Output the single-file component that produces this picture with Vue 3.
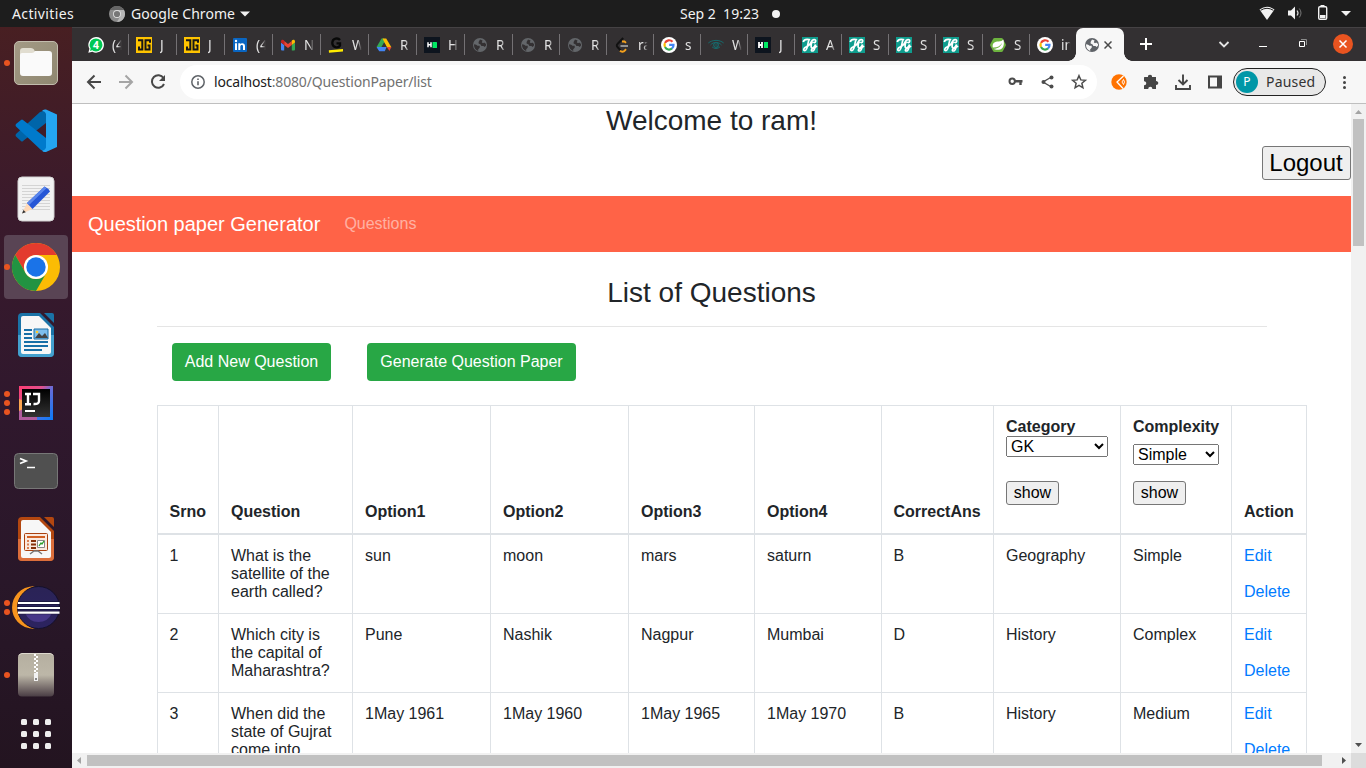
<script setup>
const tabs = [
  { icon: 'whatsapp', title: '(4' },
  { icon: 'jgy', title: 'J' },
  { icon: 'jgy', title: 'J' },
  { icon: 'linkedin', title: '(4' },
  { icon: 'gmail', title: 'N' },
  { icon: 'gword', title: 'W' },
  { icon: 'drive', title: 'R' },
  { icon: 'hr', title: 'H' },
  { icon: 'globe', title: 'R' },
  { icon: 'globe', title: 'R', short: true },
  { icon: 'globe', title: 'R', short: true },
  { icon: 'leet', title: 'ra', short: true },
  { icon: 'google', title: 's', short: true },
  { icon: 'eye', title: 'W', short: true },
  { icon: 'hr2', title: 'J', short: true },
  { icon: 'jgt', title: 'A', short: true },
  { icon: 'jgt', title: 'S', short: true },
  { icon: 'jgt', title: 'S', short: true },
  { icon: 'jgt', title: 'S', short: true },
  { icon: 'spring', title: 'S', short: true },
  { icon: 'google', title: 'in', short: true, last: true },
]
const dock = [
  { icon: 'files', dots: 1 },
  { icon: 'vscode', dots: 0 },
  { icon: 'editor', dots: 0 },
  { icon: 'chrome', dots: 1, active: true },
  { icon: 'writer', dots: 0 },
  { icon: 'intellij', dots: 3 },
  { icon: 'terminal', dots: 0 },
  { icon: 'impress', dots: 0 },
  { icon: 'eclipse', dots: 2 },
  { icon: 'archive', dots: 1 },
]
const rows = [
  ['1', 'What is the satellite of the earth called?', 'sun', 'moon', 'mars', 'saturn', 'B', 'Geography', 'Simple'],
  ['2', 'Which city is the capital of Maharashtra?', 'Pune', 'Nashik', 'Nagpur', 'Mumbai', 'D', 'History', 'Complex'],
  ['3', 'When did the state of Gujrat come into', '1May 1961', '1May 1960', '1May 1965', '1May 1970', 'B', 'History', 'Medium'],
]
const plain = ['Srno', 'Question', 'Option1', 'Option2', 'Option3', 'Option4', 'CorrectAns']
</script>

<template>
  <div class="desktop">
    <svg class="defs" width="0" height="0">
      <defs>
        <linearGradient id="gFiles" x1="0" y1="0" x2="1" y2="1"><stop offset="0" stop-color="#a39a85" /><stop offset="1" stop-color="#8f8770" /></linearGradient>
        <linearGradient id="gIj" x1="0" y1="0" x2="1" y2="1"><stop offset="0" stop-color="#fd3d72" /><stop offset=".35" stop-color="#e0508c" /><stop offset=".5" stop-color="#6b6bd6" /><stop offset="1" stop-color="#087cfa" /></linearGradient>
        <linearGradient id="gIn" x1="0" y1="0" x2="0" y2="1"><stop offset="0" stop-color="#000" /><stop offset="1" stop-color="#333" /></linearGradient>
        <linearGradient id="gZip" x1="0" y1="0" x2="0" y2="1"><stop offset="0" stop-color="#b5afa0" /><stop offset=".5" stop-color="#bdb7a8" /><stop offset="1" stop-color="#4a3d44" /></linearGradient>
        <linearGradient id="gEc" x1="0" y1="0" x2="0" y2="1"><stop offset="0" stop-color="#2a2356" /><stop offset="1" stop-color="#2c2360" /></linearGradient>
        <symbol id="globe" viewBox="0 0 16 16"><circle cx="8" cy="8" r="7" fill="currentColor" /><path d="M2.200 7.200c1.600.2 2.600.7 3.300 1.500h2.200v2.100L6.200 12.200v1.700C3.600 13 2 10.800 2 8z" fill="var(--hole)" /><path d="M8 2.600 6.600 5v1.500l2 .9.8 1.500h2l1.300 1.200 1.300-1.500V7L12.200 5.600l-1.200.6L9.800 5.300l.8-1.900z" fill="var(--hole)" /></symbol>
        <symbol id="whatsapp" viewBox="0 0 16 16"><path d="M.3 15.700 1.400 11.800A7.800 7.800 0 1 1 4.400 14.700z" fill="#fff" /><circle cx="8" cy="7.900" r="6.500" fill="#00c853" /><path d="M2 14l.8-3 2 2z" fill="#00c853" /><text x="4.800" y="12" font-size="11" font-weight="700" fill="#fff" font-family="Roboto, sans-serif">4</text></symbol>
        <symbol id="jgy" viewBox="0 0 16 16"><path fill="#ffc400" d="M0 0h16v16H0z" /><path d="M2 3.200h4.300v9.300H3V9.500M14 5.800V3.200H9.500v9.300H13.500V8.500h-2" fill="none" stroke="#171717" stroke-width="2" /></symbol>
        <symbol id="linkedin" viewBox="0 0 16 16"><rect x="1" y="1" width="14" height="14" rx="1" fill="#0a66c2" /><path fill="#fff" d="M3 6.200h2V13H3zM6.300 6.200h2v1c1-1.600 4.700-1.700 4.700 1.800v4h-2V9.500c0-2.200-2.700-1.900-2.700 0V13h-2z" /><circle cx="4" cy="4" r="1.200" fill="#fff" /></symbol>
        <symbol id="gmail" viewBox="0 0 16 16"><path fill="#4285f4" d="M1 5.500 4.200 8v5.500H2a1 1 0 0 1-1-1z" /><path fill="#34a853" d="M15 5.500 11.800 8v5.500H14a1 1 0 0 0 1-1z" /><path fill="#ea4335" d="M4.200 4 8 6.900 11.800 4v4L8 10.900 4.200 8z" /><path fill="#c5221f" d="M1 4.500C1 2.800 2.800 2.300 4.200 3.500V8L1 5.500z" /><path fill="#fbbc04" d="M15 4.500c0-1.700-1.800-2.200-3.200-1V8L15 5.500z" /></symbol>
        <symbol id="gword" viewBox="0 0 16 16"><path d="M12 3C10 .5 4.500 1 4.300 5.700c-.2 4.900 6 5.800 7.700 2.900V6.400H8.500" fill="none" stroke="#080808" stroke-width="2.300" /><path d="M.8 13.200 15 12v2.500L1 15.700z" fill="#ffeb00" /></symbol>
        <symbol id="drive" viewBox="0 0 16 16"><path fill="#34a853" d="M5.500 1.500h2.700l1.500 2.600L4 14 .6 10z" /><path fill="#fbbc04" d="M6.500 1.500h3.700l5.200 8.700h-4.500z" /><path fill="#4285f4" d="M.6 10h10l-1.800 4.300H3.200z" /><path fill="#ea4335" d="M10.800 10h4.600l-2 4z" /><path fill="#333032" d="m8 5.400 2.600 4.600H5.400z" /></symbol>
        <symbol id="hr" viewBox="0 0 16 16"><path fill="#0d141e" d="M0 0h16v16H0z" /><path d="M4 5.300v5M7 5.300v5M4 7.800h3" stroke="#fff" stroke-width="1.500" /><rect x="8.500" y="5" width="4.500" height="6" rx=".5" fill="#00ea64" /></symbol>
        <symbol id="hr2" viewBox="0 0 16 16"><path fill="#0d141e" d="M0 0h16v16H0z" /><path d="M4 5v6M7 5v6M4 8h3" stroke="#fff" stroke-width="1.800" /><rect x="9" y="5" width="4" height="6" fill="#00ea64" /></symbol>
        <symbol id="leet" viewBox="0 0 16 16"><path d="M9.200 1 3.500 7a2 2 0 0 0 0 3l3 3.300" fill="none" stroke="#111" stroke-width="2" /><path d="M8 4.500h2.500l1.500 1.400M6 13.700c1.400 1.600 3.600 1.300 5-.4l1-1.200" fill="none" stroke="#f5a11c" stroke-width="1.900" /><path d="M6.500 9H14" stroke="#b3b3b3" stroke-width="1.500" /></symbol>
        <symbol id="google" viewBox="0 0 16 16"><circle cx="8" cy="8" r="8" fill="#fff" /><g fill="none" stroke-width="2.200"><path d="M11.500 4.800A4.500 4.500 0 0 0 4 5.900" stroke="#ea4335" /><path d="M4 5.900a4.700 4.700 0 0 0 0 4.200" stroke="#fbbc04" /><path d="M4 10.100a4.500 4.500 0 0 0 7 1.300" stroke="#34a853" /><path d="M11 11.500c1.200-1 1.600-2.200 1.500-3.700H8.200" stroke="#4285f4" /></g></symbol>
        <symbol id="eye" viewBox="0 0 16 16"><path d="M.3 6C4.500 2.500 11.500 2.500 15.700 6M2.500 8C5.500 4.500 10.500 4.500 13.500 8M4 9.800c2.500 2.300 5.500 2.300 8 0" fill="none" stroke="#17696b" stroke-width="1" /><circle cx="8" cy="8" r="2.300" fill="none" stroke="#17696b" stroke-width="1.200" /><circle cx="8" cy="8" r=".8" fill="#17696b" /></symbol>
        <symbol id="jgt" viewBox="0 0 16 16"><path fill="#0f9d8e" d="M0 0h16v16H0z" /><path d="M1.200 5C2 2.300 4 2 7.200 2.600 5.500 5 6 12.800 3.300 13.500c-2.500.5-2-2.600 1-3.600s4-2.500 5-5.100c1-2.600 4.700-3 4.400-.6-.2 1.800-2 2-2 .5M10.500 4.500c-2.200 3-1.700 7 .3 6.500 1.500-.5 2.200-2 2.700-3.500-.5 3.500-.8 6.500-3 6.500-1.500 0-1.700-1.500.5-2.500 1.500-.8 3-1.300 4-2.500" fill="none" stroke="#fff" stroke-width="1.700" /></symbol>
        <symbol id="spring" viewBox="0 0 16 16"><path fill="#6db33f" d="M4.500 1h7a1.500 1.500 0 0 1 1.300.8L15.600 7a2 2 0 0 1 0 2l-2.800 5.200a1.500 1.500 0 0 1-1.300.8h-7a1.500 1.500 0 0 1-1.300-.8L.4 9a2 2 0 0 1 0-2l2.800-5.200A1.500 1.500 0 0 1 4.500 1z" /><path fill="#fff" d="M13.300 2.500c1.500 5 .2 9.800-4.800 10.300-2 .2-3.700-.2-4.800-1C8 11.700 11 9.500 12 6c-2 3.500-5 4.700-9.200 4.500C2 5.500 5 4.600 8.500 4.400c2.500-.1 3.800-.6 4.800-1.900z" /></symbol>

        <symbol id="files" viewBox="0 0 64 64"><rect x="10.500" y="10.500" width="43" height="43" rx="4.500" fill="url(#gFiles)" stroke="#c2bcad" stroke-width="1" /><path d="M16 20q0-3 3-3h8q2 0 3 1.500l1.500 3.500H45v14H16z" fill="#e1ddd0" /><path d="M16 24q0-2 2-2h10q2 0 3-2h14q3 0 3 3v19q0 3-3 3H19q-3 0-3-3z" fill="#fafafa" /></symbol>
        <symbol id="vscode" viewBox="0 0 64 64"><path fill="#0065a9" d="M42 11v13L19 42q-1 1-2 0l-5-4.500q-1-1.300 0-2.500L36 13z" /><path fill="#007acc" d="M42 53V39L19 21q-1-1-2 0l-5 4q-1 1 0 2.500L37 51z" /><path fill="#24a5f1" d="M42 10.500 53 15.500V48L42 53q-3 .5-4-1.500 3 0 4-3V15q-1-3-4-3 1-2 4-1.500z" /></symbol>
        <symbol id="editor" viewBox="0 0 64 64"><rect x="14" y="10" width="36" height="44" rx="4" fill="#f2f2f2" stroke="#d2d2d2" /><path d="M18 18.500h28M18 21.500h28M18 24.500h28M18 27.500h28M18 30.500h28M18 33.500h28M18 36.500h28M18 39.500h28M18 42.500h28" stroke="#d4d4d4" /><path d="m18 46.500 5-10.500 5.500 6z" fill="#ffd9b8" /><path d="m18 46.500 1.500-3.500 2.300 2.200z" fill="#333" /><path d="m23 36 17.500-16.500q3.500 1.500 5.500 5L28.500 42z" fill="#2656d6" /><path d="m23 36 17.500-16.500 2 1.700L25 38z" fill="#5a86ec" /></symbol>
        <symbol id="chrome" viewBox="0 0 64 64"><circle cx="32" cy="32" r="24" fill="#fbbc04" /><path d="M11.200 20A24 24 0 0 1 52.800 20H32A12 12 0 0 0 21.600 38z" fill="#e33b2e" /><path d="M11.200 20A24 24 0 0 0 32 56l10.400-18A12 12 0 0 1 21.600 38z" fill="#229342" /><circle cx="32" cy="32" r="12" fill="#fff" /><circle cx="32" cy="32" r="9.700" fill="#1a73e8" /></symbol>
        <symbol id="writer" viewBox="0 0 64 64"><path d="M18 10h18l14 14v26q0 4-4 4H18q-4 0-4-4V14q0-4 4-4z" fill="#1a73a7" /><path d="M14 32h36v18q0 4-4 4H18q-4 0-4-4z" fill="#43a0ce" /><path d="M19 13h16l12 12v24q0 2-2 2H19q-2 0-2-2V15q0-2 2-2z" fill="#f7f7f7" /><path d="M40 10h8q2 0 2 2v8z" fill="#1a73a7" /><path d="M20 27h8M20 31h8M20 35h8M20 39h24M20 43h24M20 47h18" stroke="#176fa7" stroke-width="2" /><path d="M30 26h14v10H30z" fill="#7ebeed" stroke="#176fa7" /><path d="m31 35 4-5 3 3 3-3 3 5z" fill="#444" /><circle cx="33" cy="29" r="1.300" fill="#ffc928" /></symbol>
        <symbol id="intellij" viewBox="0 0 64 64"><path d="M15 15h34v34H15z" fill="url(#gIj)" /><path d="M15 28l5 2v8l-5 8z" fill="#fda650" /><path d="M15 40l4-2v8h14v3H15z" fill="#b05c9d" /><path d="M18 18h28v28H18z" fill="url(#gIn)" /><path d="M21 23h6M24 23v10M21 33.200h6M29 23h6v7q0 3.500-5.500 3" fill="none" stroke="#fff" stroke-width="2.400" /><path d="M21 40h10" stroke="#fff" stroke-width="2" /></symbol>
        <symbol id="terminal" viewBox="0 0 64 64"><rect x="10.500" y="14.500" width="43" height="35" rx="4" fill="#505050" stroke="#777" /><path d="m16 19.500 6 2.500-6 2.500" fill="none" stroke="#fff" stroke-width="1.800" /><path d="M23 28.500h8" stroke="#fff" stroke-width="1.500" /></symbol>
        <symbol id="impress" viewBox="0 0 64 64"><path d="M18 10h18l14 14v26q0 4-4 4H18q-4 0-4-4V14q0-4 4-4z" fill="#b34710" /><path d="M14 32h36v18q0 4-4 4H18q-4 0-4-4z" fill="#dc6e3b" /><path d="M19 13h16l12 12v24q0 2-2 2H19q-2 0-2-2V15q0-2 2-2z" fill="#f7f7f7" /><path d="M40 10h8q2 0 2 2v8z" fill="#b34710" /><rect x="20.500" y="26.500" width="23" height="17" rx="1" fill="#fae9df" stroke="#a9400f" /><path d="M23 30h18" stroke="#d06024" stroke-width="2" /><path d="M23 34h2M23 37.500h2M23 41h2" stroke="#d98052" stroke-width="2" /><path d="M27 34h5M27 37.500h5M27 41h5" stroke="#86300b" stroke-width="2" /><path d="M33.500 33.500h7v7h-7z" fill="#fff" stroke="#888" /><path d="m35 39 2-3 1 1 2-3" fill="none" stroke="#2c9e2c" stroke-width="1.300" /><path d="m26 47 4-3h4l4 3" fill="none" stroke="#777" stroke-width="1.500" /></symbol>
        <symbol id="eclipse" viewBox="0 0 64 64"><path d="M31 11c-30.500 1-30.500 42 0 43-20-8-20-35 0-43z" fill="#f7941e" /><circle cx="34.500" cy="32.500" r="21" fill="url(#gEc)" stroke="#14102b" /><path d="M21 38q4 9 13.500 9T48 38z" fill="#473788" /><path d="M14 28h41.500M13.500 33h42M14 37.500h41.500" stroke="#19143b" stroke-width="3.500" /><path d="M14 28h41.500M13.500 33h42.500M14 37.700h41.500" stroke="#fff" stroke-width="2.200" /></symbol>
        <symbol id="archive" viewBox="0 0 64 64"><rect x="14" y="10.500" width="36" height="43" rx="4" fill="url(#gZip)" /><path d="M15 12.500q1-2 3-2h28q2 0 3 2" fill="none" stroke="#ddd9ce" /><path d="M31 11v20" stroke="#fff" stroke-width="2" stroke-dasharray="2 2" /><path d="M33 13v18" stroke="#fff" stroke-width="2" stroke-dasharray="2 2" /><path d="M30 30h4v8h-4z" fill="#f2f2f2" /><path d="M31 35h2v2h-2z" fill="#888" /></symbol>
      </defs>
    </svg>

    <header class="topbar">
      <span class="activities">Activities</span>
      <svg class="mini" viewBox="0 0 16 16"><circle cx="8" cy="8" r="8" fill="#8b8b8b" /><path d="M1.100 4A8 8 0 0 1 14.900 4H8z" fill="#666" /><path d="M8 4.100h7A8 8 0 0 1 8 16l3.400-6z" fill="#b5b5b5" /><circle cx="8" cy="8" r="4" fill="#ddd" /><circle cx="8" cy="8" r="3.100" fill="#777" /></svg>
      <span class="appname">Google Chrome</span>
      <svg class="caret" viewBox="0 0 10 6"><path d="M0 .5h10L5 5.500z" fill="#f2f2f2" /></svg>
      <span class="clock">Sep 2&nbsp; 19:23</span>
      <i class="notify"></i>
      <svg class="status" viewBox="0 0 100 27"><path d="M.5 9.500Q8 4 15.500 9.500L8 20z" fill="#f2f2f2" /><path d="M1.600 10.300q6.400-4 12.800 0" stroke="#1d1d1d" fill="none" /><path d="M29 10.500h3l4-4v13l-4-4h-3z" fill="#f2f2f2" /><path d="M38 10.500q2 2.500 0 5" fill="none" stroke="#d8d8d8" stroke-width="1.200" /><path d="M40.300 8.500q3.400 4.500 0 9" fill="none" stroke="#777" /><rect x="59.700" y="6.700" width="8" height="12.600" rx="1.200" fill="none" stroke="#f2f2f2" stroke-width="1.400" /><path d="M61.500 5h4v1.500h-4zM61 15h5.500v3H61z" fill="#f2f2f2" /><path d="M82 11h10l-5 5z" fill="#f2f2f2" /></svg>
    </header>

    <div class="body">
      <aside class="dock">
        <div v-for="d in dock" :key="d.icon" class="app" :class="{ active: d.active }">
          <span class="dots"><i v-for="n in d.dots" :key="n"></i></span>
          <svg width="64" height="64"><use :href="'#' + d.icon" /></svg>
        </div>
        <div class="grid9"><i v-for="n in 9" :key="n"></i></div>
      </aside>

      <main class="browser">
        <div class="tabs">
          <div v-for="(t, i) in tabs" :key="i" class="tab" :class="{ short: t.short, last: t.last }">
            <svg class="fav" width="16" height="16"><use :href="'#' + t.icon" /></svg>
            <span class="title">{{ t.title }}</span>
          </div>
          <div class="tab current">
            <svg class="fav" width="16" height="16"><use href="#globe" /></svg>
            <svg class="x" viewBox="0 0 8 8"><path d="m.5.500 7 7m0-7-7 7" stroke="#4a4a4a" stroke-width="1.500" /></svg>
          </div>
          <svg class="plus" viewBox="0 0 12 12"><path d="M6 0v12M0 6h12" stroke="#fff" stroke-width="2" /></svg>
          <svg class="win" viewBox="0 0 150 34"><path d="m15.500 15 4.500 4.500 4.500-4.500" fill="none" stroke="#e4e4e4" stroke-width="1.800" /><path d="M55 19.500h8" stroke="#fff" /><path d="M95.500 14.500h5v5h-5z" fill="none" stroke="#fff" /><path d="M97 12.500h5.500V18" fill="none" stroke="#8c8c8c" /><circle cx="139" cy="17" r="10" fill="#e95420" /><path d="m135.500 13.500 7 7m0-7-7 7" stroke="#fff" stroke-width="1.500" /></svg>
        </div>

        <div class="toolbar">
          <svg class="nav" viewBox="0 0 100 42" fill="none" stroke-width="2"><path d="M29 21H16m6.500-6.500L16 21l6.500 6.500" stroke="#474747" /><path d="M47 21h13m-6.500-6.500L60 21l-6.500 6.500" stroke="#a5a5a5" /><path d="M91.500 17A6.300 6.300 0 1 0 92 23" stroke="#474747" /><path d="M93 14v6h-6z" fill="#474747" /></svg>
          <div class="omni">
            <svg class="info" viewBox="0 0 14 14"><circle cx="7" cy="7" r="6.200" fill="none" stroke="#5f6368" stroke-width="1.500" /><path d="M7 6.200v4M7 3.500v1.600" stroke="#5f6368" stroke-width="1.600" /></svg>
            <span class="url"><b>localhost</b>:8080/QuestionPaper/list</span>
            <svg class="tools" viewBox="0 0 90 34"><circle cx="11.200" cy="16.300" r="2.700" fill="none" stroke="#4c4c4c" stroke-width="2" /><path d="M14 16.300h7.500M19.500 17v3" stroke="#4c4c4c" stroke-width="2.400" /><path d="m50.500 12-8.500 5 8.500 5" fill="none" stroke="#4c4c4c" stroke-width="1.400" /><g fill="#4c4c4c"><circle cx="50.500" cy="12.500" r="2" /><circle cx="42.500" cy="17" r="2" /><circle cx="50.500" cy="21.500" r="2" /></g><path d="m78 10.700 1.800 4.200 4.600.4-3.500 3 1 4.500-3.900-2.400-3.900 2.400 1-4.500-3.500-3 4.600-.4z" fill="none" stroke="#4c4c4c" stroke-width="1.500" /></svg>
          </div>
          <svg class="ext" viewBox="0 0 130 42"><circle cx="14" cy="21" r="7.700" fill="#ff7301" /><path d="m18.500 15-6.500 6 6 6.500" fill="none" stroke="#fff" stroke-width="1.300" /><path d="m18.500 18.500-1.500 2.500 1.500 2.500 1-2.500z" fill="none" stroke="#fff" stroke-width=".9" /><path d="M39.500 16h3.500c-.7-3 4.700-3 4 0H51v4c3 0 3 4 0 4V28h-3.700c.3-3-4.200-3-4 0H39v-3.700c3 .2 3-4.200 0-4v-3.300q0-1 .5-1z" fill="#454545" /><path d="M78 13.500v10m-4.500-4.500 4.500 4.500 4.500-4.500M71 24v4h14v-4" fill="none" stroke="#454545" stroke-width="1.900" /><path d="M104 15.500h12v11h-12z" fill="none" stroke="#454545" stroke-width="2" /><path d="M112 15h4v12h-4z" fill="#454545" /></svg>
          <div class="profile"><span class="avatar">P</span><span class="paused">Paused</span></div>
          <div class="kebab"><i></i><i></i><i></i></div>
        </div>

        <div class="view">
          <div class="page">
            <h3 class="welcome">Welcome to ram!</h3>
            <div class="logrow"><button class="logout">Logout</button></div>
            <nav class="navbar"><a class="brand">Question paper Generator</a><a class="link">Questions</a></nav>
            <section class="container">
              <h3 class="heading">List of Questions</h3>
              <div class="rule"></div>
              <div class="actions"><a class="btn">Add New Question</a><a class="btn wide">Generate Question Paper</a></div>
              <table>
                <colgroup><col class="c61" /><col class="c134" /><col class="c138" /><col class="c138" /><col class="c126" /><col class="c127" /><col class="c112" /><col class="c127" /><col class="c111" /><col class="c75" /></colgroup>
                <thead>
                  <tr>
                    <th v-for="h in plain" :key="h">{{ h }}</th>
                    <th class="filter">Category<select class="cat"><option>GK</option></select><button class="show">show</button></th>
                    <th class="filter">Complexity<select class="cplx"><option>Simple</option></select><button class="show near">show</button></th>
                    <th>Action</th>
                  </tr>
                </thead>
                <tbody>
                  <tr v-for="r in rows" :key="r[0]">
                    <td v-for="(c, i) in r" :key="i">{{ c }}</td>
                    <td><a>Edit</a><br /><br /><a>Delete</a></td>
                  </tr>
                </tbody>
              </table>
            </section>
          </div>
          <div class="vbar"><svg viewBox="0 0 15 15"><path d="M4 10h7L7.500 6z" fill="#a3a3a3" /></svg><i></i><svg class="end" viewBox="0 0 15 15"><path d="M4 5h7l-3.500 4z" fill="#505050" /></svg></div>
          <div class="hbar"><svg viewBox="0 0 15 15"><path d="M9 4v7L5 7.500z" fill="#a3a3a3" /></svg><i></i><svg class="end" viewBox="0 0 15 15"><path d="M6 4v7l4-3.500z" fill="#505050" /></svg></div>
          <div class="corner"></div>
        </div>
      </main>
    </div>
  </div>
</template>

<style>
html, body { margin: 0; overflow: hidden; }
</style>

<style scoped>
* { box-sizing: border-box; }
svg { display: block; flex: none; }
.defs { position: absolute; }
.desktop { width: 1366px; height: 768px; overflow: hidden; font-family: "Noto Sans", "Open Sans", sans-serif; }
.topbar { height: 27px; background: #1d1d1d; color: #f2f2f2; display: flex; align-items: center; font-size: 14px; white-space: nowrap; }
.activities { width: 63px; margin-left: 12px; letter-spacing: .38px; }
.mini { width: 16px; height: 16px; margin-left: 34px; }
.appname { width: 104px; margin-left: 6px; letter-spacing: .05px; }
.caret { width: 10px; height: 6px; margin-left: 5px; }
.clock { width: 80px; margin-left: 430px; letter-spacing: 0; }
.notify { width: 8px; height: 8px; border-radius: 50%; background: #f2f2f2; margin-left: 12px; }
.status { width: 100px; height: 27px; margin-left: 479px; }
.body { display: flex; height: 741px; }
.dock { width: 72px; padding: 4px 4px 0; background: linear-gradient(#481f22, #3a1a2c 25%, #30182d 50%, #291729 75%, #231420); display: flex; flex-direction: column; gap: 4px; }
.app { height: 64px; flex: none; border-radius: 4px; display: flex; position: relative; }
.app.active { background: #594454; }
.dots { position: absolute; left: 0; top: 0; height: 64px; display: flex; flex-direction: column; justify-content: center; gap: 3px; }
.dots i { width: 6px; height: 6px; border-radius: 50%; background: #e95420; }
.grid9 { width: 30px; margin: 8px 0 0 17px; display: grid; grid-template-columns: repeat(3, 6px); gap: 6px; }
.grid9 i { width: 6px; height: 6px; border-radius: 1.5px; background: #eee; }
.browser { width: 1294px; display: flex; flex-direction: column; }
.tabs { height: 34px; background: #333032; border-top: 1px solid #454244; padding-left: 8px; display: flex; }
.tab { width: 48px; height: 33px; display: flex; align-items: center; padding: 0 0 0 8px; position: relative; color: #63666a; --hole: #333032; }
.tab.short { width: 47px; }
.tab::after { content: ""; position: absolute; right: -1px; top: 6px; width: 1px; height: 21px; background: #747174; }
.tab.last::after, .current::after { display: none; }
.title { width: 11px; margin-left: 8px; overflow: hidden; font-size: 13.5px; line-height: 18px; color: #e3e3e3; white-space: nowrap; mask-image: linear-gradient(90deg, #000 50%, transparent 88%); }
.tab.current { width: 48px; background: #f7f7f7; border-radius: 7px 7px 0 0; color: #5f6368; --hole: #f7f7f7; }
.current::before { content: ""; position: absolute; left: -8px; right: -8px; bottom: 0; height: 8px; background: radial-gradient(circle at 0 0, transparent 7.500px, #f7f7f7 8px) 0 0 / 8px 8px no-repeat, radial-gradient(circle at 100% 0, transparent 7.500px, #f7f7f7 8px) 100% 0 / 8px 8px no-repeat; }
.x { width: 8px; height: 8px; margin-left: 4px; }
.plus { width: 12px; height: 12px; margin: 10px 0 0 16px; }
.win { width: 150px; height: 34px; margin: -1px 0 0 52px; }
.toolbar { height: 43px; background: #f7f7f7; border-bottom: 1px solid #bfbfbf; display: flex; align-items: center; }
.nav { width: 100px; height: 42px; }
.omni { width: 917px; height: 34px; margin-left: 8px; border-radius: 17px; background: #fff; display: flex; align-items: center; }
.info { width: 14px; height: 14px; margin-left: 11px; }
.url { width: 600px; margin-left: 9px; padding-bottom: 1px; font-size: 14px; letter-spacing: -.16px; color: #717171; white-space: nowrap; }
.url b { font-weight: 400; color: #202020; }
.tools { width: 90px; height: 34px; margin-left: 187px; }
.ext { width: 130px; height: 42px; margin-left: 8px; }
.profile { width: 93px; height: 28px; margin-left: -2px; border: 1px solid #222; border-radius: 14px; background: #e8e8e8; display: flex; align-items: center; color: #333; font-size: 14px; }
.avatar { width: 22px; height: 22px; margin-left: 2px; border-radius: 50%; background: #0097a7; color: #fff; font-size: 12px; line-height: 22px; text-align: center; }
.paused { margin-left: 8px; padding-bottom: 1px; letter-spacing: .2px; }
.kebab { margin-left: 17px; display: flex; flex-direction: column; gap: 2px; }
.kebab i { width: 3px; height: 3px; border-radius: 50%; background: #444; }
.view { height: 664px; display: grid; grid-template: 649px 15px / 1279px 15px; background: #fff; }
.page { overflow: hidden; font: 16px/1.5 "Liberation Sans", Arial, sans-serif; color: #212529; }
h3 { font-size: 28px; line-height: 33.600px; margin: 0; text-align: center; font-weight: 400; }
.heading { margin-right: 1px; }
.logrow { height: 50px; margin-top: 8.400px; display: flex; justify-content: flex-end; align-items: flex-start; }
button { font-family: inherit; color: #000; background: #efefef; border: 1px solid #767676; border-radius: 3px; }
.logout { width: 89px; height: 34px; padding: 0 1px 0 0; font-size: 24px; line-height: 30px; }
.navbar { height: 56px; background: #ff6347; display: flex; align-items: center; padding-left: 16px; }
.brand { color: #fff; font-size: 20px; }
.link { color: rgba(255,255,255,.5); margin-left: 24px; }
.container { width: 1110px; margin-left: 85px; padding-top: 24px; }
.rule { height: 1px; background: #e5e5e5; margin-top: 16.400px; }
.actions { display: flex; gap: 36px; padding-left: 15px; margin-top: 16px; }
.btn { width: 159px; height: 38px; text-align: center; line-height: 38px; color: #fff; background: #28a745; border-radius: 4px; white-space: nowrap; }
.btn.wide { width: 209px; }
table { width: 1150px; margin-top: 24px; table-layout: fixed; border-collapse: collapse; line-height: 18px; }
th, td { border: 1px solid #dee2e6; padding: 12px 10px 12px 12px; text-align: left; vertical-align: top; }
th:first-child, td:first-child, th:nth-child(7), td:nth-child(7) { padding-left: 11.500px; }
th { height: 129px; vertical-align: bottom; border-bottom-width: 2px; }
th.filter { vertical-align: top; }
td { height: 79px; }
td a { color: #007bff; }
select { display: block; height: 21px; font: 16px "Liberation Sans", Arial, sans-serif; padding: 0; color: #000; }
.cat { width: 102px; }
.cplx { width: 86px; margin-top: 8px; }
.show { display: block; height: 24px; width: 53px; margin-top: 24px; padding: 0; font-size: 16px; line-height: 20px; }
.show.near { margin-top: 16px; }
.c61 { width: 61px; } .c134 { width: 134px; } .c138 { width: 138px; } .c126 { width: 126px; } .c127 { width: 127px; } .c112 { width: 112px; } .c111 { width: 111px; } .c75 { width: 75px; }
.vbar { background: #f1f1f1; display: flex; flex-direction: column; align-items: center; }
.vbar i { width: 11px; height: 127px; background: #c1c1c1; }
.vbar svg, .hbar svg { width: 15px; height: 15px; }
.vbar .end { margin-top: auto; }
.hbar { background: #f1f1f1; display: flex; align-items: center; }
.hbar i { width: 1235px; height: 11px; background: #c1c1c1; }
.hbar .end { margin-left: auto; }
.corner { background: #dcdcdc; }
</style>
